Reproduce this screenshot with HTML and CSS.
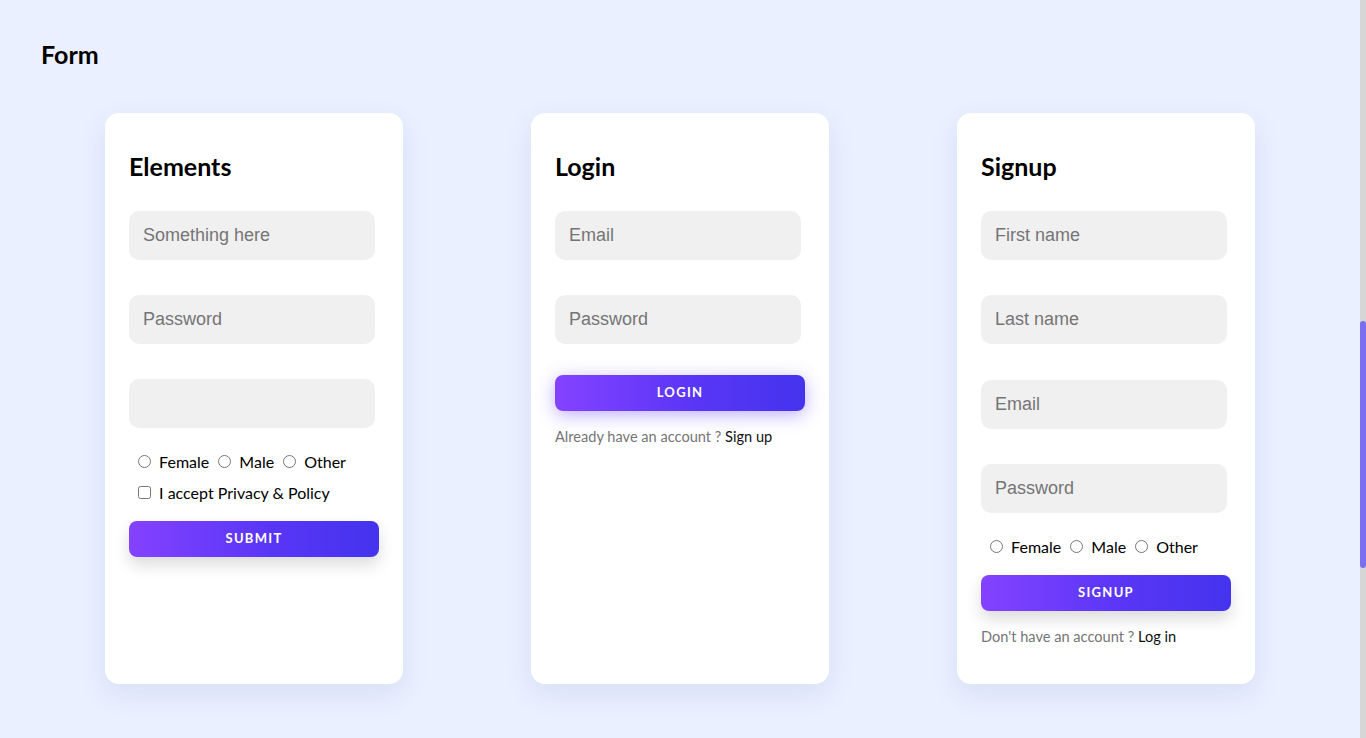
FILE: index.html
```html
<!DOCTYPE html>
<html lang="en">
<head>
<meta charset="utf-8">
<title>Form</title>
<link rel="stylesheet" href="styles.css">
</head>
<body>
<div class="page">
  <main class="main">
    <h1 class="page-title">Form</h1>
    <div class="cards">
      <section class="card">
        <h2 class="card-title">Elements</h2>
        <input class="field" type="text" placeholder="Something here">
        <input class="field" type="password" placeholder="Password">
        <input class="field" type="text">
        <div class="choice-row radios">
          <label class="choice"><input type="radio" name="g1"> Female</label>
          <label class="choice"><input type="radio" name="g1"> Male</label>
          <label class="choice"><input type="radio" name="g1"> Other</label>
        </div>
        <div class="choice-row">
          <label class="choice"><input type="checkbox"> I accept Privacy &amp; Policy</label>
        </div>
        <button class="btn">SUBMIT</button>
      </section>

      <section class="card">
        <h2 class="card-title">Login</h2>
        <input class="field" type="email" placeholder="Email">
        <input class="field" type="password" placeholder="Password">
        <button class="btn btn-glow btn-login">LOGIN</button>
        <p class="note">Already have an account ? <a href="#">Sign up</a></p>
      </section>

      <section class="card card-signup">
        <h2 class="card-title">Signup</h2>
        <input class="field" type="text" placeholder="First name">
        <input class="field" type="text" placeholder="Last name">
        <input class="field" type="email" placeholder="Email">
        <input class="field" type="password" placeholder="Password">
        <div class="choice-row radios">
          <label class="choice"><input type="radio" name="g2"> Female</label>
          <label class="choice"><input type="radio" name="g2"> Male</label>
          <label class="choice"><input type="radio" name="g2"> Other</label>
        </div>
        <button class="btn">SIGNUP</button>
        <p class="note">Don't have an account ? <a href="#">Log in</a></p>
      </section>
    </div>
  </main>
  <div class="scrollbar"><div class="thumb"></div></div>
</div>
</body>
</html>
```

FILE: styles.css
```css
* { box-sizing: border-box; }
html, body { margin: 0; padding: 0; }
body {
  background: #eaf0ff;
  font-family: Lato, "Noto Sans", sans-serif;
  color: #000;
  overflow: hidden;
}
.page {
  display: flex;
  height: 738px;
}
.main {
  flex: 1;
  padding: 0 41px;
}
.page-title {
  margin: 38px 0 0;
  font-size: 25px;
  line-height: 32px;
  font-weight: 700;
}
.cards {
  margin-top: 43px;
  display: grid;
  grid-template-columns: repeat(3, 1fr);
  justify-items: center;
}
.card {
  width: 298px;
  height: 571px;
  background: #fff;
  border-radius: 14px;
  box-shadow: 0 10px 28px rgba(60, 80, 160, 0.10);
  padding: 37px 24px 24px;
  display: flex;
  flex-direction: column;
  align-items: flex-start;
}
.card-title {
  margin: 0 0 29px;
  font-size: 25px;
  line-height: 32px;
  font-weight: 700;
}
.field {
  width: 246px;
  height: 49px;
  border: none;
  outline: none;
  border-radius: 10px;
  background: #f0f0f0;
  padding: 0 14px;
  font-family: "Liberation Sans", Arial, sans-serif;
  font-size: 18px;
  color: #222;
  margin-bottom: 35px;
  flex: none;
}
.card-signup .field:nth-of-type(2) { margin-bottom: 36px; }
.field::placeholder { color: #757575; }
.radios { margin-top: -14px; }
.choice-row {
  display: flex;
  align-items: center;
  height: 24px;
  padding-left: 9px;
  margin-bottom: 7px;
  font-size: 16px;
}
.choice {
  display: flex;
  align-items: center;
  margin-right: 9px;
  white-space: pre;
}
.choice input {
  margin: 0 4px 0 0;
  width: 13px;
  height: 13px;
}
.btn {
  width: 250px;
  height: 36px;
  flex: none;
  border: none;
  border-radius: 8px;
  background: linear-gradient(90deg, #8442ff 0%, #5a36f7 55%, #4433ee 100%);
  color: #fff;
  font-family: Lato, "Noto Sans", sans-serif;
  font-weight: 700;
  font-size: 13px;
  line-height: 16px;
  padding: 0 0 2px;
  letter-spacing: 1.3px;
  margin-top: 10px;
  box-shadow: 0 8px 16px rgba(0, 0, 0, 0.14);
}
.btn-login { margin-top: -4px; }
.btn-glow { box-shadow: 0 4px 18px rgba(110, 80, 255, 0.45); }
.note {
  margin: 16px 0 0;
  font-size: 14.6px;
  line-height: 20px;
  color: #757575;
}
.note a {
  color: #111;
  text-decoration: none;
}
.scrollbar {
  width: 6px;
  flex: none;
  background: #d6d6d6;
}
.thumb {
  margin-top: 321px;
  height: 247px;
  border-radius: 3px;
  background: #7b6ef0;
}
```
